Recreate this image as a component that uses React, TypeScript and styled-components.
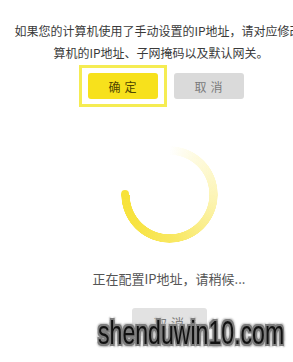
import React from 'react';
import styled, { createGlobalStyle } from 'styled-components';

const GlobalStyle = createGlobalStyle`
  html, body {
    margin: 0;
    padding: 0;
    background: #ffffff;
    overflow: hidden;
  }
  body {
    font-family: "Noto Sans CJK SC", "Liberation Sans", sans-serif;
  }
`;

const Page = styled.div`
  position: relative;
  width: 322px;
  height: 362px;
`;

const Message = styled.div`
  padding-top: 20px;
  text-align: center;
  font-size: 12px;
  line-height: 22px;
  color: #3a3a3a;
`;

const Line = styled.div<{ $shift?: number }>`
  white-space: nowrap;
  margin-left: ${p => p.$shift || 0}px;
`;

const ButtonRow = styled.div`
  display: flex;
  justify-content: center;
  align-items: center;
  gap: 7px;
  margin-top: 1px;
`;

const FocusRing = styled.div`
  border: 3px solid #f5ec52;
  padding: 5px 6px;
`;

const Button = styled.div<{ $primary?: boolean; $width?: number }>`
  width: ${p => p.$width || 70}px;
  height: 26px;
  border-radius: 3px;
  display: flex;
  align-items: center;
  justify-content: center;
  font-size: 12px;
  letter-spacing: 4px;
  text-indent: 4px;
  background: ${p => (p.$primary ? '#f7e11c' : '#dadada')};
  color: ${p => (p.$primary ? '#4f4600' : '#7a7a7a')};
`;

const Progress = styled.div`
  display: flex;
  flex-direction: column;
  align-items: center;
  padding-left: 16px;
  margin-top: 39px;
`;

const Spinner = styled.div`
  position: relative;
  width: 97px;
  height: 97px;
  border-radius: 50%;
  background: conic-gradient(
    rgba(247, 226, 58, 0) 0deg,
    rgba(247, 226, 58, 0.16) 35deg,
    rgba(247, 226, 58, 0.38) 95deg,
    rgba(247, 226, 58, 0.78) 170deg,
    rgba(247, 226, 58, 0.96) 230deg,
    rgba(247, 226, 58, 1) 270deg,
    transparent 270deg
  );
  mask: radial-gradient(circle, transparent 39.5px, #000 40px, #000 48px, transparent 48.5px);
  -webkit-mask: radial-gradient(circle, transparent 39.5px, #000 40px, #000 48px, transparent 48.5px);

  &::before {
    content: '';
    position: absolute;
    left: 0.25px;
    top: 48.5px;
    width: 8.5px;
    height: 8.5px;
    margin-top: -4.25px;
    border-radius: 50%;
    background: #f7e23a;
  }
`;

const Status = styled.div`
  margin-top: 26px;
  font-size: 13px;
  line-height: 20px;
  color: #555555;
`;

const BottomButton = styled(Button)`
  margin-top: 19px;
  height: 28px;
  background: #e2e2e2;
  font-size: 13px;
`;

const Watermark = styled.div`
  position: absolute;
  left: 98px;
  top: 316px;
  font-family: "Liberation Sans", Arial, sans-serif;
  font-size: 33px;
  line-height: 1;
  color: #111111;
  white-space: nowrap;
  transform: scaleX(0.7);
  transform-origin: left top;
  text-shadow:
    2px 0 0 #7d7d7d, -2px 0 0 #7d7d7d, 0 2px 0 #7d7d7d, 0 -2px 0 #7d7d7d,
    2px 2px 0 #7d7d7d, -2px -2px 0 #7d7d7d, 2px -2px 0 #7d7d7d, -2px 2px 0 #7d7d7d,
    3px 3px 2px #b5b5b5, -3px -3px 2px #c5c5c5, 3px -3px 2px #c5c5c5, -3px 3px 2px #c5c5c5;
`;

export default function App() {
  return (
    <Page>
      <GlobalStyle />
      <Message>
        <Line $shift={6}>如果您的计算机使用了手动设置的IP地址，请对应修改计</Line>
        <Line>算机的IP地址、子网掩码以及默认网关。</Line>
      </Message>
      <ButtonRow>
        <FocusRing>
          <Button $primary>确定</Button>
        </FocusRing>
        <Button>取消</Button>
      </ButtonRow>
      <Progress>
        <Spinner />
        <Status>正在配置IP地址，请稍候...</Status>
        <BottomButton $width={75}>取消</BottomButton>
      </Progress>
      <Watermark>shenduwin10.com</Watermark>
    </Page>
  );
}
